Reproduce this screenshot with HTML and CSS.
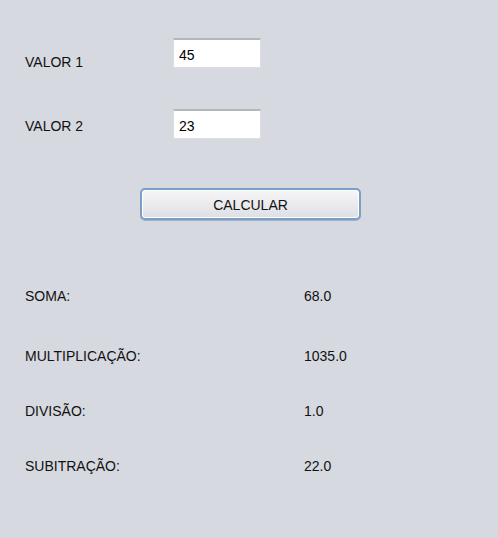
FILE: index.html
```html
<!DOCTYPE html>
<html lang="pt">
<head>
<meta charset="utf-8">
<title>Calculadora</title>
<link rel="stylesheet" href="styles.css">
</head>
<body>
<main class="app">
  <section class="form">
    <div class="field-row">
      <label class="field-label field-label--first" for="v1">VALOR 1</label>
      <input class="text-field" id="v1" type="text" value="45">
    </div>
    <div class="field-row field-row--second">
      <label class="field-label field-label--second" for="v2">VALOR 2</label>
      <input class="text-field" id="v2" type="text" value="23">
    </div>
    <button class="calc-button" type="button">CALCULAR</button>
  </section>
  <section class="results">
    <div class="result result--first"><span class="result-label">SOMA:</span><span class="result-value">68.0</span></div>
    <div class="result"><span class="result-label">MULTIPLICAÇÃO:</span><span class="result-value">1035.0</span></div>
    <div class="result"><span class="result-label">DIVISÃO:</span><span class="result-value">1.0</span></div>
    <div class="result"><span class="result-label">SUBITRAÇÃO:</span><span class="result-value">22.0</span></div>
  </section>
</main>
</body>
</html>
```

FILE: styles.css
```css
html, body {
  margin: 0;
  padding: 0;
  height: 100%;
}

body {
  background: #d6d9e0;
  font-family: "Liberation Sans", Arial, sans-serif;
  font-size: 14px;
  line-height: 16px;
  color: #111;
}

.app {
  padding: 38px 0 0 25px;
}

.form {
  display: flex;
  flex-direction: column;
}

.field-row {
  display: flex;
  align-items: flex-start;
}

.field-row--second {
  margin-top: 39px;
}

.field-label {
  width: 148px;
}

.field-label--first {
  padding-top: 16px;
}

.field-label--second {
  padding-top: 9px;
}

.text-field {
  box-sizing: border-box;
  width: 88px;
  height: 30px;
  margin: 0;
  padding: 2px 0 0 5px;
  background: #fff;
  border: 1px solid #dcdde0;
  border-top: 2px solid #b4b6ba;
  border-radius: 0;
  font-family: "Liberation Sans", Arial, sans-serif;
  font-size: 14px;
  color: #000;
  outline: none;
}

.calc-button {
  box-sizing: border-box;
  align-self: flex-start;
  margin: 49px 0 0 115px;
  width: 221px;
  height: 32px;
  padding: 2px 0 0 0;
  border: 2px solid #7b9dc6;
  border-radius: 5px;
  background: linear-gradient(#f6f6f8 0%, #ececf0 45%, #dedfe4 100%);
  box-shadow: inset 0 0 0 1px #ffffff, 0 1px 0 #9fb2cc;
  font-family: "Liberation Sans", Arial, sans-serif;
  font-size: 14px;
  color: #111;
}

.results {
  margin-top: 68px;
}

.result {
  display: flex;
  height: 55px;
}

.result--first {
  height: 60px;
}

.result-label {
  width: 279px;
}
```
